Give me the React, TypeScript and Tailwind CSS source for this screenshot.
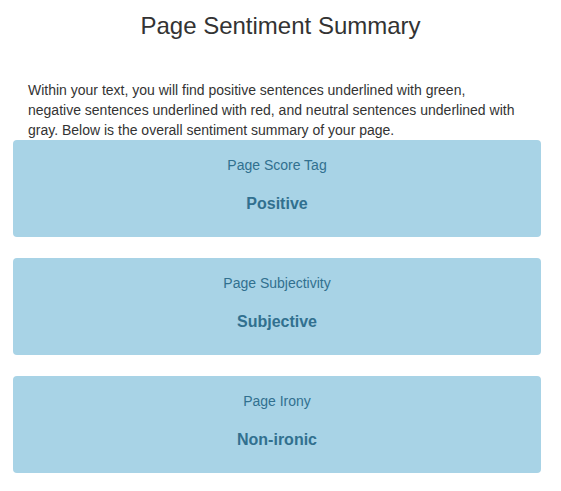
const items = [
  { label: "Page Score Tag", value: "Positive" },
  { label: "Page Subjectivity", value: "Subjective" },
  { label: "Page Irony", value: "Non-ironic" },
]

export default function App() {
  return (
    <div className="min-h-[491px] w-[561px] bg-white font-['Liberation_Sans',Arial,sans-serif] text-[#333]">
      <h3 className="pt-[13px] text-center text-[24px] leading-[26px]">Page Sentiment Summary</h3>
      <p className="mt-[41px] w-[540px] pl-[28px] text-[14px] leading-5">
        Within your text, you will find positive sentences underlined with green,
        <br />
        negative sentences underlined with red, and neutral sentences underlined with
        <br />
        gray. Below is the overall sentiment summary of your page.
      </p>
      <div className="ml-[13px] flex w-[528px] flex-col gap-[21px]">
        {items.map((item) => (
          <div
            key={item.label}
            className="rounded-[4px] bg-[#a8d3e6] pt-[15px] pb-[23px] text-center text-[#31708f]"
          >
            <div className="text-[14px] leading-5">{item.label}</div>
            <div className="mt-[19px] text-[16px] font-bold leading-5">{item.value}</div>
          </div>
        ))}
      </div>
    </div>
  )
}
